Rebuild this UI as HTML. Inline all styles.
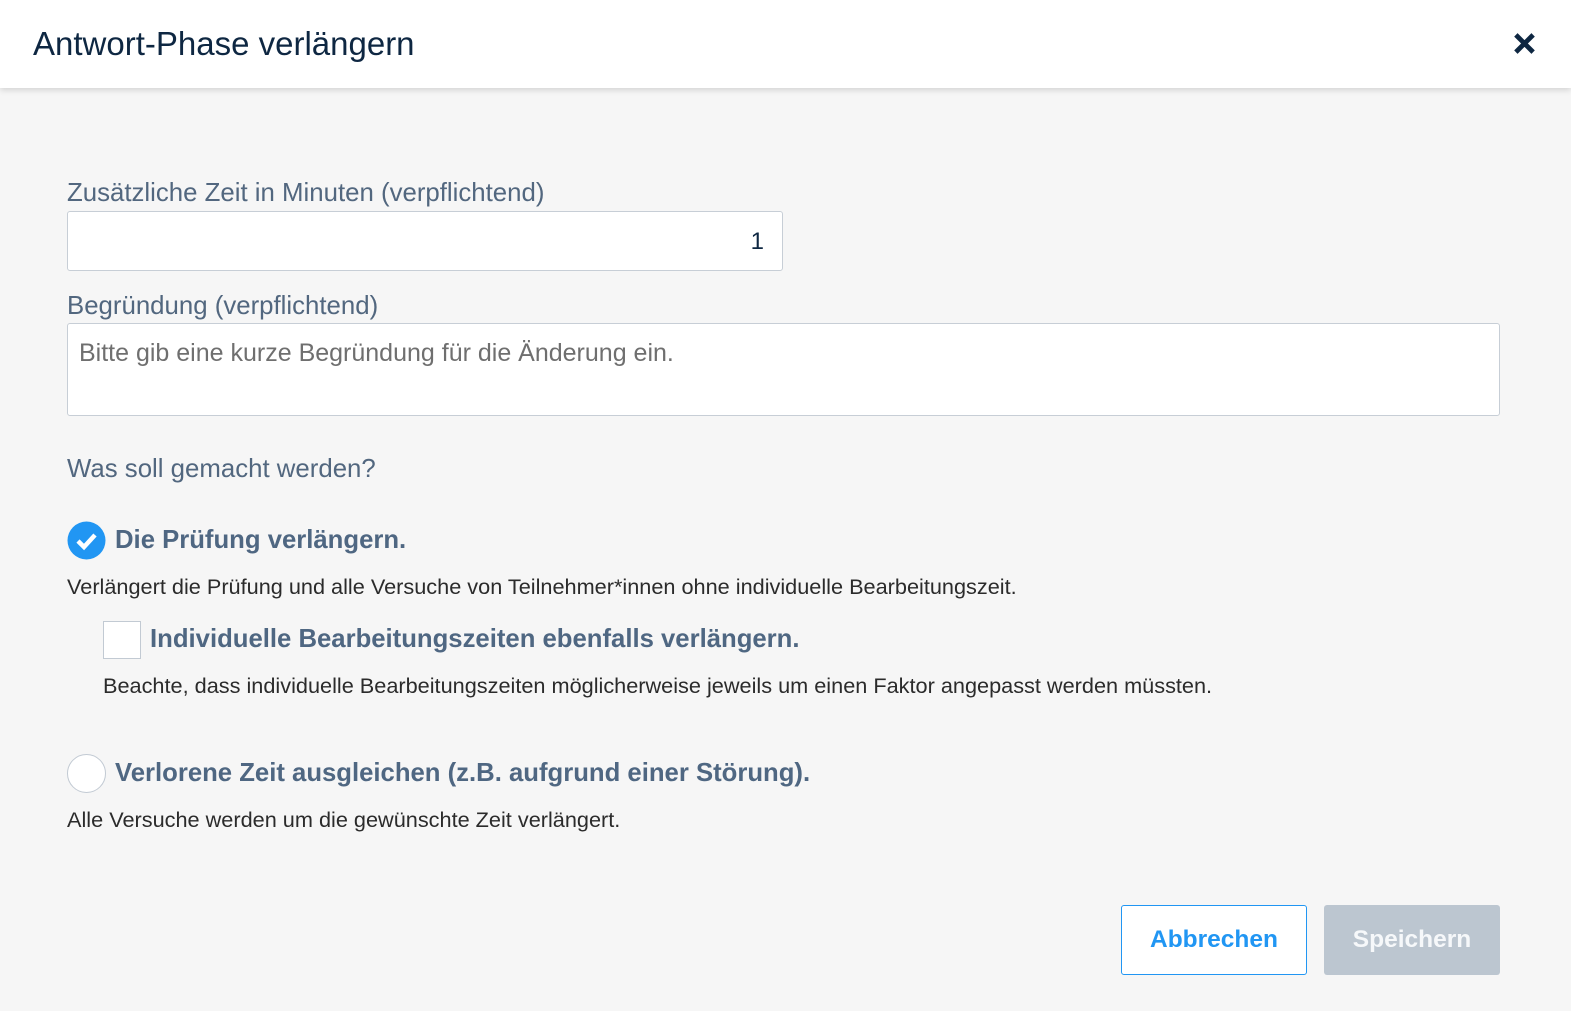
<!DOCTYPE html>
<html><head><meta charset="utf-8"><style>
*{box-sizing:border-box;margin:0;padding:0}
body{width:1571px;height:1011px;background:#f6f6f6;font-family:"Liberation Sans",sans-serif;position:relative;overflow:hidden}
.hdr{position:absolute;left:0;top:0;width:1571px;height:88px;background:#fff;box-shadow:0 2px 6px rgba(0,0,0,.15)}
.t{position:absolute;white-space:nowrap}
.lbl{color:#52677f;font-size:25.8px}
.h{color:#4f6782;font-weight:bold;font-size:25.7px}
.b{color:#2b2b2b;font-size:21.7px}
.inp{position:absolute;background:#fff;border:1px solid #c7ced6;border-radius:3px}
</style></head><body>
<div class="hdr">
<div class="t" style="left:33px;top:25px;font-size:33px;color:#0e2742">Antwort-Phase verlängern</div>
<svg style="position:absolute;left:1513px;top:32px" width="23" height="23" viewBox="0 0 24 24"><path d="M3 3L21 21M21 3L3 21" stroke="#0e2742" stroke-width="5"/></svg>
</div>
<div class="t lbl" style="left:67px;top:179px">Zusätzliche Zeit in Minuten (verpflichtend)</div>
<div class="inp" style="left:67px;top:211px;width:716px;height:60px"><span style="position:absolute;right:18px;top:16px;font-size:24px;color:#0e2742">1</span></div>
<div class="t lbl" style="left:67px;top:292px">Begründung (verpflichtend)</div>
<div class="inp" style="left:67px;top:323px;width:1433px;height:93px"><span style="position:absolute;left:11px;top:15px;font-size:25px;color:#6f6f6f">Bitte gib eine kurze Begründung für die Änderung ein.</span></div>
<div class="t lbl" style="left:67px;top:455px">Was soll gemacht werden?</div>
<svg style="position:absolute;left:67px;top:521px" width="39" height="39" viewBox="0 0 39 39"><circle cx="19.5" cy="19.5" r="19" fill="#2196f3"/><path d="M11 20l6 6 11-12" stroke="#fff" stroke-width="4.5" fill="none"/></svg>
<div class="t h" style="left:115px;top:526px">Die Prüfung verlängern.</div>
<div class="t b" style="left:67px;top:574px">Verlängert die Prüfung und alle Versuche von Teilnehmer*innen ohne individuelle Bearbeitungszeit.</div>
<div style="position:absolute;left:103px;top:621px;width:38px;height:38px;background:#fff;border:1px solid #c2cad3"></div>
<div class="t h" style="left:150px;top:625px">Individuelle Bearbeitungszeiten ebenfalls verlängern.</div>
<div class="t b" style="left:103px;top:673px">Beachte, dass individuelle Bearbeitungszeiten möglicherweise jeweils um einen Faktor angepasst werden müssten.</div>
<div style="position:absolute;left:67px;top:754px;width:39px;height:39px;border-radius:50%;background:#fff;border:1px solid #c2cad3"></div>
<div class="t h" style="left:115px;top:759px">Verlorene Zeit ausgleichen (z.B. aufgrund einer Störung).</div>
<div class="t b" style="left:67px;top:807px">Alle Versuche werden um die gewünschte Zeit verlängert.</div>
<div style="position:absolute;left:1121px;top:905px;width:186px;height:70px;border:1px solid #2196f3;border-radius:3px;background:#fff;color:#2196f3;font-weight:bold;font-size:24.5px;text-align:center;line-height:68px">Abbrechen</div>
<div style="position:absolute;left:1324px;top:905px;width:176px;height:70px;border-radius:3px;background:#bcc6d0;color:#f6f8fa;font-weight:bold;font-size:24.5px;text-align:center;line-height:70px">Speichern</div>
</body></html>
